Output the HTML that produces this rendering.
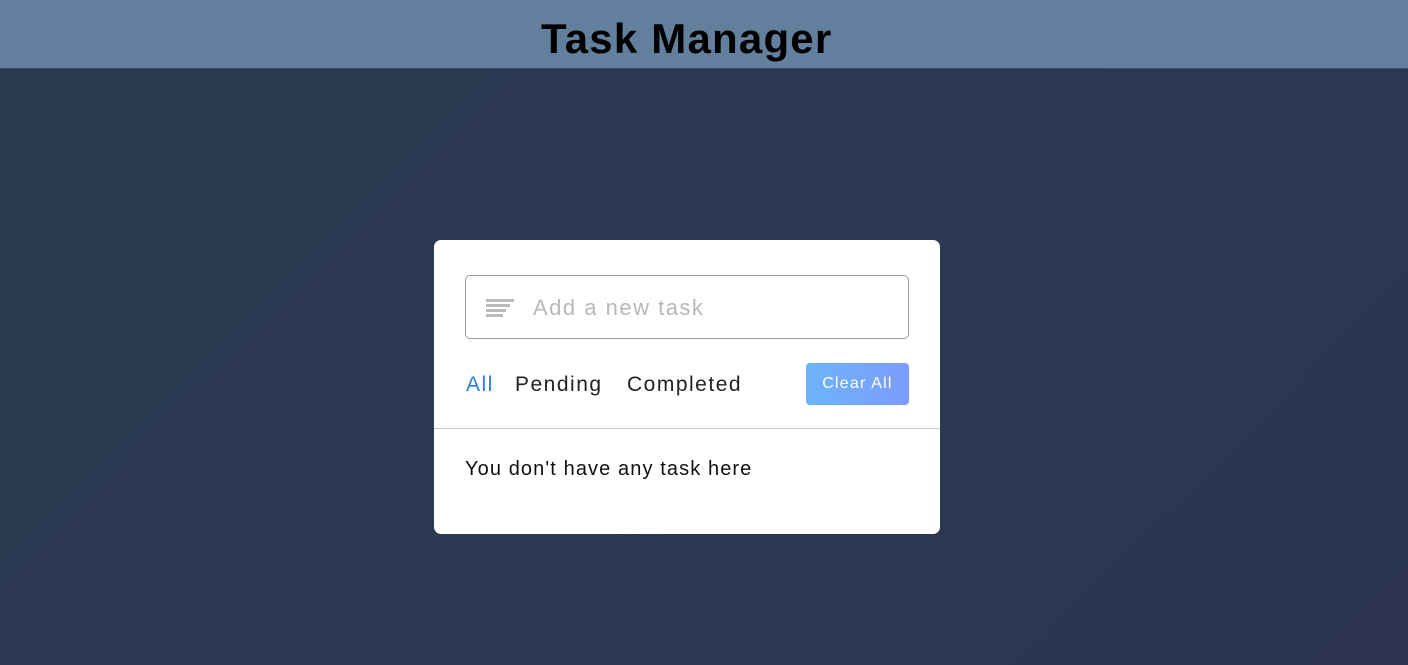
<!DOCTYPE html>
<html><head><style>
*{margin:0;padding:0;box-sizing:border-box}
body{width:1408px;height:665px;overflow:hidden;font-family:"Liberation Sans",sans-serif;background:linear-gradient(135deg,#2a3a50 0%,#2b3a52 40%,#2d3550 100%);position:relative}
header{height:69px;background:#62809e;border-bottom:1px solid #3d4f66;position:relative}
header h1{position:absolute;left:541px;top:0;font-size:42px;font-weight:bold;color:#000;line-height:78px;letter-spacing:1.2px;white-space:nowrap}
.card{position:absolute;left:434px;top:240px;width:506px;height:294px;background:#fff;border-radius:7px}
.input{position:absolute;left:31px;top:35px;width:444px;height:64px;border:1px solid #999;border-radius:5px}
.input .ph{position:absolute;left:67px;top:19px;font-size:22px;color:#b8b8b8;letter-spacing:1.5px}
.ic{position:absolute;left:20px;top:23px}
.ic div{height:3px;background:#bbb;margin-bottom:2px}
.f{position:absolute;top:133px;font-size:21px;color:#222;letter-spacing:1.5px}
.btn{position:absolute;left:372px;top:123px;width:103px;height:42px;border-radius:4px;background:linear-gradient(90deg,#6cb4fb,#7c9cfc);color:#fff;font-size:16px;text-align:center;line-height:42px;letter-spacing:1.2px}
.hr{position:absolute;left:0;right:0;top:188px;border-top:1px solid #ccc}
.msg{position:absolute;left:31px;top:218px;font-size:20px;color:#111;letter-spacing:1.1px}
</style></head><body>
<header><h1>Task Manager</h1></header>
<div class="card">
<div class="input"><div class="ic"><div style="width:28px"></div><div style="width:24px"></div><div style="width:20px"></div><div style="width:17px"></div></div><span class="ph">Add a new task</span></div>
<span class="f" style="left:32px;color:#2a7cf5">All</span>
<span class="f" style="left:81px">Pending</span>
<span class="f" style="left:193px">Completed</span>
<div class="btn">Clear All</div>
<div class="hr"></div>
<div class="msg">You don't have any task here</div>
</div>
</body></html>
